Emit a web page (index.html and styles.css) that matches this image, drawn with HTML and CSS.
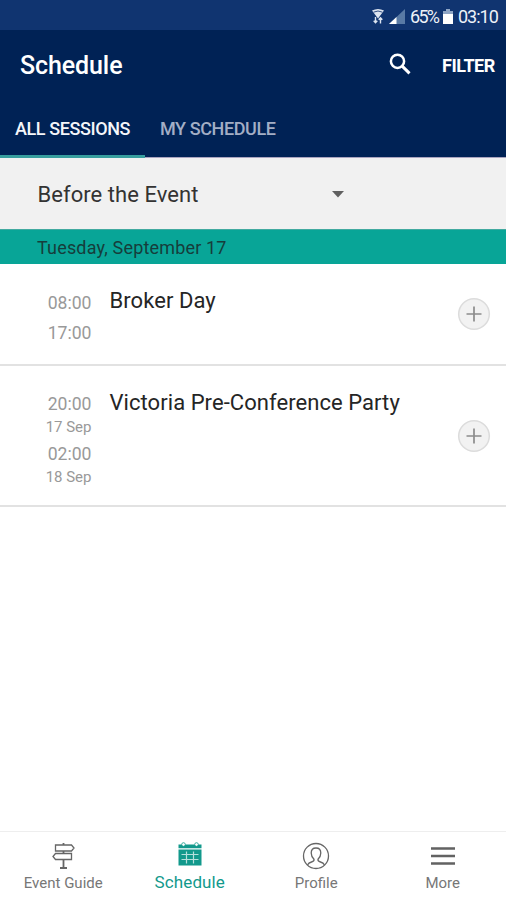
FILE: index.html
```html
<!DOCTYPE html>
<html lang="en">
<head>
<meta charset="utf-8">
<title>Schedule</title>
<link rel="stylesheet" href="styles.css">
</head>
<body>
<div class="app">
  <div class="status">
    <svg class="wifi" width="14" height="17" viewBox="0 0 14 17"><path d="M1 2.500Q7-.5 13 2.500L7 10.500Z" fill="#dce4f0"/><path d="M2.500 4.200Q7 1.800 11.500 4.200" fill="none" stroke="#314d80"/><path d="M4.500 9v5.500M2.700 12.700l1.800 2 1.800-2M9.500 15.500V10M7.700 11.800l1.800-2 1.800 2" fill="none" stroke="#dce4f0" stroke-width="1.400"/></svg>
    <svg class="signal" width="16" height="15" viewBox="0 0 16 15"><path d="M0 15L16 0V15Z" fill="#597aa5"/><path d="M0 15L7.500 8V15Z" fill="#fff"/></svg>
    <span class="percent">65%</span>
    <svg class="battery" width="10" height="15" viewBox="0 0 10 15"><path d="M3 0h4v2h3v13H0V2h3Z" fill="#8ea5c5"/><path d="M0 5h10v10H0Z" fill="#fff"/></svg>
    <span class="clock">03:10</span>
  </div>
  <header class="bar">
    <h1>Schedule</h1>
    <svg class="search" width="24" height="24" viewBox="0 0 24 24" fill="none" stroke="#fff"><circle cx="9.500" cy="9.300" r="6.600" stroke-width="2.500"/><path d="M14.200 14.100L21.500 21.400" stroke-width="3"/></svg>
    <span class="filter">FILTER</span>
  </header>
  <nav class="tabs">
    <span class="tab active">ALL SESSIONS</span>
    <span class="tab">MY SCHEDULE</span>
  </nav>
  <div class="select"><span class="choice">Before the Event</span><svg width="12" height="7" viewBox="0 0 12 7"><path d="M0 0H12L6 6.500Z" fill="#606060"/></svg></div>
  <div class="date"><span>Tuesday, September 17</span></div>
  <main>
    <section class="row first">
      <div class="times"><span class="time">08:00</span><span class="time">17:00</span></div>
      <h2>Broker Day</h2>
      <svg class="add" width="34" height="34" viewBox="0 0 34 34"><circle cx="17" cy="17" r="15.300" fill="#f2f2f2" stroke="#dcdcdc" stroke-width="1.500"/><path d="M9.500 17h15M17 9.500v15" stroke="#8c8c8c" stroke-width="1.700"/></svg>
    </section>
    <section class="row second">
      <div class="times"><span class="time">20:00</span><span class="day">17 Sep</span><span class="time">02:00</span><span class="day">18 Sep</span></div>
      <h2>Victoria Pre-Conference Party</h2>
      <svg class="add" width="34" height="34" viewBox="0 0 34 34"><circle cx="17" cy="17" r="15.300" fill="#f2f2f2" stroke="#dcdcdc" stroke-width="1.500"/><path d="M9.500 17h15M17 9.500v15" stroke="#8c8c8c" stroke-width="1.700"/></svg>
    </section>
  </main>
  <footer class="nav">
    <div class="item"><svg width="28" height="28" viewBox="0 0 28 28" fill="none" stroke="#666" stroke-width="1.300"><path d="M6.500 3H22.500L25 6L22.500 9H6.500ZM22.500 11.500H6.500L4 14.500L6.500 17.500H22.500Z"/><path d="M14.500 1v2M14.500 9v2.500M14.500 17.500v8.500M11 26h7" stroke-width="1.800"/></svg><span>Event Guide</span></div>
    <div class="item on"><svg width="28" height="28" viewBox="0 0 28 28"><path d="M2.500 2.500h23V6.300h-23ZM2.500 7.500h23V23.500h-23Z" fill="#12998c"/><path d="M10.500 9.500v12M17.500 9.500v12M5.500 12.500h17M5.500 17.500h17" stroke="#b5e0dc" stroke-width="1.200" fill="none"/><circle cx="7.500" cy="2.500" r="1.800" fill="#fff" stroke="#12998c" stroke-width=".8"/><circle cx="20.500" cy="2.500" r="1.800" fill="#fff" stroke="#12998c" stroke-width=".8"/></svg><span class="sched">Schedule</span></div>
    <div class="item"><svg width="28" height="28" viewBox="0 0 28 28" fill="none" stroke="#666" stroke-width="1.300"><circle cx="14" cy="14" r="12.500"/><path d="M5.500 23Q6.500 20.800 9.500 20Q12.500 19.200 12 17.200Q9.200 14.500 9.200 11Q9.200 6 14 6T18.800 11Q18.800 14.500 16 17.200Q15.500 19.200 18.500 20Q21.500 20.800 22.500 23"/></svg><span>Profile</span></div>
    <div class="item"><svg width="28" height="28" viewBox="0 0 28 28"><path d="M2 6.500h24M2 14h24M2 21.500h24" stroke="#626262" stroke-width="2.400"/></svg><span>More</span></div>
  </footer>
</div>
</body>
</html>
```
FILE: styles.css
```css
* { box-sizing: border-box; }
body { margin: 0; font-family: Roboto, sans-serif; background: #fff; }
svg { display: block; flex: none; }
span, h1, h2 { white-space: nowrap; }
.app { width: 506px; height: 900px; display: flex; flex-direction: column; }
.status { height: 30px; background: #103470; color: #eef2f8; display: flex; align-items: center; padding: 2px 8px 0 0; justify-content: flex-end; font-size: 18px; }
.wifi { margin-right: 4px; }
.signal { margin-right: 5px; }
.percent { width: 29px; letter-spacing: -1.7px; }
.battery { margin: 0 5px 0 4px; }
.clock { width: 40px; letter-spacing: -1px; }
.bar { height: 70px; background: #002255; color: #fff; display: flex; align-items: center; padding: 0 11px 0 20px; }
h1 { margin: 0 auto 0 0; font-size: 25px; font-weight: 500; letter-spacing: -.1px; }
.search { margin: 0 30px 3px 0; }
.filter { font-size: 18px; font-weight: 700; width: 53px; letter-spacing: -.5px; }
.tabs { height: 58px; background: #002255; display: flex; border-bottom: 1px solid #a9a4bf; font-size: 18px; font-weight: 500; letter-spacing: -.4px; color: #a3aec5; }
.tab { padding: 0 15px; line-height: 58px; height: 58px; }
.active { width: 145px; color: #f4f6fa; border-bottom: 3px solid #379e9e; }
.select { height: 71px; background: #f1f1f1; display: flex; align-items: center; padding: 1px 0 0 37.5px; font-size: 22px; letter-spacing: .05px; color: #333; }
.choice { width: 294.5px; }
.date { height: 35px; background: #08a597; padding-left: 37px; line-height: 36px; font-size: 18px; letter-spacing: .17px; color: #163d3b; border-top: 1px solid #42aaa0; }
main { flex: 1; }
.row { display: flex; border-bottom: 2px solid #e2e2e2; padding-right: 15px; }
.first { height: 102px; }
.second { height: 141px; }
.times { width: 91.5px; margin-right: 18px; padding-top: 24px; display: flex; flex-direction: column; align-items: flex-end; color: #999; }
.time { font-size: 17.6px; line-height: 30px; }
.second .time { line-height: 29px; }
.day { font-size: 15px; line-height: 16px; margin-bottom: 5px; }
h2 { margin: 22px auto 0 0; font-size: 22px; line-height: 29px; letter-spacing: .06px; font-weight: 400; color: #252525; }
.add { margin-top: 33px; }
.second .add { margin-top: 53px; }
.nav { height: 69px; border-top: 1px solid #eee; display: grid; grid-template-columns: repeat(4, 1fr); color: #777; font-size: 15px; padding-top: 10px; }
.item { display: flex; flex-direction: column; align-items: center; }
.item span { line-height: 27px; }
.on { color: #12998c; }
.item .sched { font-size: 17px; line-height: 25px; letter-spacing: .1px; }
```
